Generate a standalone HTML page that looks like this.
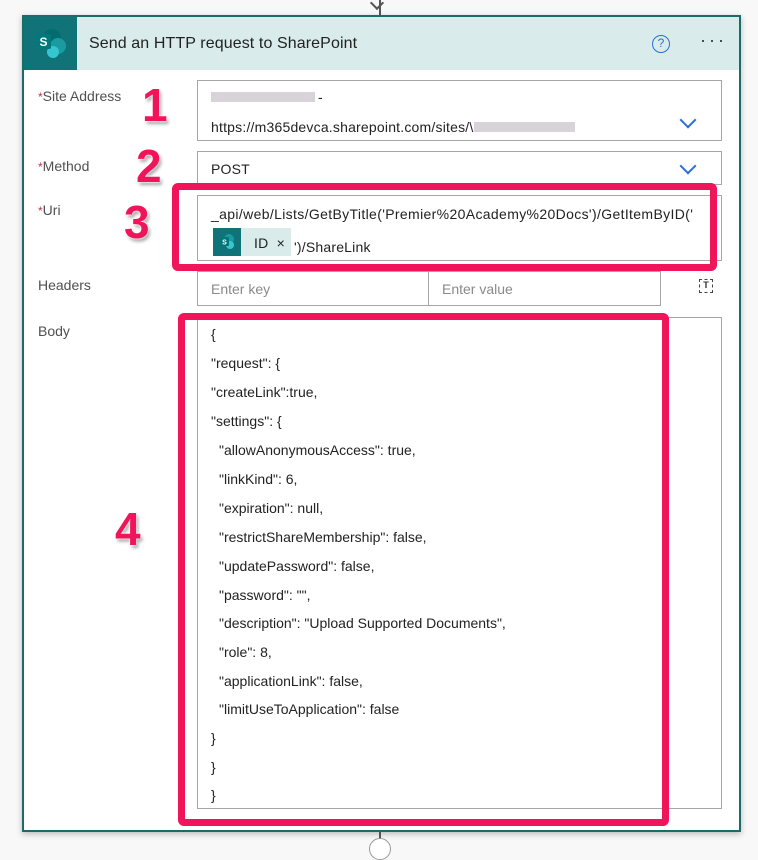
<!DOCTYPE html>
<html><head><meta charset="utf-8"><style>
*{box-sizing:border-box;margin:0;padding:0}
body{width:758px;height:848px;background:#f8f8f8;font-family:"Liberation Sans",sans-serif;position:relative;overflow:hidden;color:#323130}
.abs{position:absolute}
.card{left:22px;top:15px;width:719px;height:817px;border:2px solid #1c6b6b;background:#fff;box-shadow:0 2px 6px rgba(0,0,0,.25)}
.hdr{left:24px;top:17px;width:715px;height:53px;background:#d9ebeb}
.ico{left:24px;top:17px;width:53px;height:53px;background:#0f7377}
.lbl{font-size:14px;color:#505050}
.req{color:#c4314b;font-size:12px}
.inp{border:1px solid #a6a6a6;background:#fff}
.txt{font-size:14px;color:#222;letter-spacing:0.2px}
.ph{font-size:14px;color:#8a8a8a}
.num{font-weight:bold;font-size:46px;color:#f0155a;text-shadow:0 0 2px #fff,0 0 2px #fff,2px 3px 3px rgba(0,0,0,.35)}
.pink{border:7px solid #f0155a;border-radius:6px}
.bl{font-size:14px;color:#222;letter-spacing:0;left:211px}
.chev{width:12px;height:12px;border-right:2px solid #2b6fd6;border-bottom:2px solid #2b6fd6;transform:rotate(45deg)}
</style></head><body>
<div class="abs" style="left:379px;top:0;width:2px;height:15px;background:#555"></div>
<div class="abs" style="left:372px;top:-2px;width:10px;height:10px;border-right:2px solid #555;border-bottom:2px solid #555;transform:rotate(45deg)"></div>
<div class="abs card"></div>
<div class="abs hdr"></div>
<div class="abs ico">
<svg width="53" height="53" viewBox="0 0 53 53"><circle cx="28" cy="21" r="9" fill="#036c70"/><circle cx="34" cy="29" r="8" fill="#1a9ba1"/><circle cx="29" cy="35" r="6" fill="#37c6d0"/><rect x="12" y="17" width="15" height="15" rx="2" fill="#03787c"/><text x="19.5" y="29" font-size="12" font-weight="bold" fill="#fff" text-anchor="middle" font-family="Liberation Sans">S</text></svg>
</div>
<div class="abs" style="left:89px;top:35px;font-size:16px;color:#222;letter-spacing:0.1px">Send an HTTP request to SharePoint</div>
<div class="abs" style="left:652px;top:35px;width:18px;height:18px;border:1.5px solid #2b6fd6;border-radius:50%;color:#2b6fd6;font-size:12px;text-align:center;line-height:15px">?</div>
<div class="abs" style="left:700px;top:30px;font-size:18px;letter-spacing:3px;color:#333">···</div>

<div class="abs lbl" style="left:38px;top:88px"><span class="req">*</span>Site Address</div>
<div class="abs inp" style="left:197px;top:80px;width:525px;height:61px"></div>
<div class="abs" style="left:211px;top:92px;width:104px;height:10px;background:#d8d3d8"></div>
<div class="abs txt" style="left:318px;top:89px">-</div>
<div class="abs txt" style="left:211px;top:119px">https://m365devca.sharepoint.com/sites/\</div>
<div class="abs" style="left:474px;top:122px;width:101px;height:10px;background:#d8d3d8"></div>
<div class="abs chev" style="left:682px;top:114px"></div>

<div class="abs lbl" style="left:38px;top:158px"><span class="req">*</span>Method</div>
<div class="abs inp" style="left:197px;top:151px;width:525px;height:34px"></div>
<div class="abs txt" style="left:211px;top:161px">POST</div>
<div class="abs chev" style="left:682px;top:160px"></div>

<div class="abs lbl" style="left:38px;top:202px"><span class="req">*</span>Uri</div>
<div class="abs inp" style="left:197px;top:195px;width:525px;height:66px"></div>
<div class="abs txt" style="left:211px;top:206px;letter-spacing:0.35px">_api/web/Lists/GetByTitle('Premier%20Academy%20Docs')/GetItemByID('</div>
<div class="abs" style="left:213px;top:228px;width:78px;height:28px;background:#d9ebeb"></div>
<div class="abs" style="left:213px;top:228px;width:28px;height:28px;background:#0f7377"><svg width="28" height="28"><circle cx="16" cy="11" r="5" fill="#1a9ba1"/><circle cx="17" cy="17" r="4" fill="#37c6d0"/><rect x="7" y="9" width="9" height="9" rx="1" fill="#03787c"/><text x="11.5" y="16.5" font-size="7" font-weight="bold" fill="#fff" text-anchor="middle" font-family="Liberation Sans">S</text></svg></div>
<div class="abs txt" style="left:254px;top:235px">ID&nbsp;&nbsp;×</div>
<div class="abs txt" style="left:294px;top:239px">')/ShareLink</div>
<div class="abs pink" style="left:172px;top:183px;width:545px;height:88px"></div>

<div class="abs lbl" style="left:38px;top:277px">Headers</div>
<div class="abs inp" style="left:197px;top:271px;width:232px;height:35px"></div>
<div class="abs ph" style="left:211px;top:281px">Enter key</div>
<div class="abs inp" style="left:428px;top:271px;width:233px;height:35px"></div>
<div class="abs ph" style="left:442px;top:281px">Enter value</div>
<div class="abs" style="left:699px;top:279px;width:14px;height:14px;border:1.5px dashed #444;font-size:9px;text-align:center;line-height:11px;font-weight:bold">T</div>

<div class="abs lbl" style="left:38px;top:323px">Body</div>
<div class="abs inp" style="left:197px;top:317px;width:525px;height:492px"></div>
<div class="abs bl" style="top:326px">{</div>
<div class="abs bl" style="top:355px">"request": {</div>
<div class="abs bl" style="top:384px">"createLink":true,</div>
<div class="abs bl" style="top:413px">"settings": {</div>
<div class="abs bl" style="top:442px;left:219px">"allowAnonymousAccess": true,</div>
<div class="abs bl" style="top:471px;left:219px">"linkKind": 6,</div>
<div class="abs bl" style="top:500px;left:219px">"expiration": null,</div>
<div class="abs bl" style="top:529px;left:219px">"restrictShareMembership": false,</div>
<div class="abs bl" style="top:558px;left:219px">"updatePassword": false,</div>
<div class="abs bl" style="top:587px;left:219px">"password": "",</div>
<div class="abs bl" style="top:615px;left:219px">"description": "Upload Supported Documents",</div>
<div class="abs bl" style="top:644px;left:219px">"role": 8,</div>
<div class="abs bl" style="top:673px;left:219px">"applicationLink": false,</div>
<div class="abs bl" style="top:701px;left:219px">"limitUseToApplication": false</div>
<div class="abs bl" style="top:730px">}</div>
<div class="abs bl" style="top:759px">}</div>
<div class="abs bl" style="top:787px">}</div>
<div class="abs pink" style="left:178px;top:313px;width:491px;height:513px"></div>

<div class="abs num" style="left:142px;top:78px">1</div>
<div class="abs num" style="left:136px;top:139px">2</div>
<div class="abs num" style="left:124px;top:195px">3</div>
<div class="abs num" style="left:115px;top:502px">4</div>

<div class="abs" style="left:379px;top:832px;width:2px;height:7px;background:#555"></div>
<div class="abs" style="left:369px;top:838px;width:22px;height:22px;border:1.5px solid #999;border-radius:50%;background:#fff"></div>
</body></html>
